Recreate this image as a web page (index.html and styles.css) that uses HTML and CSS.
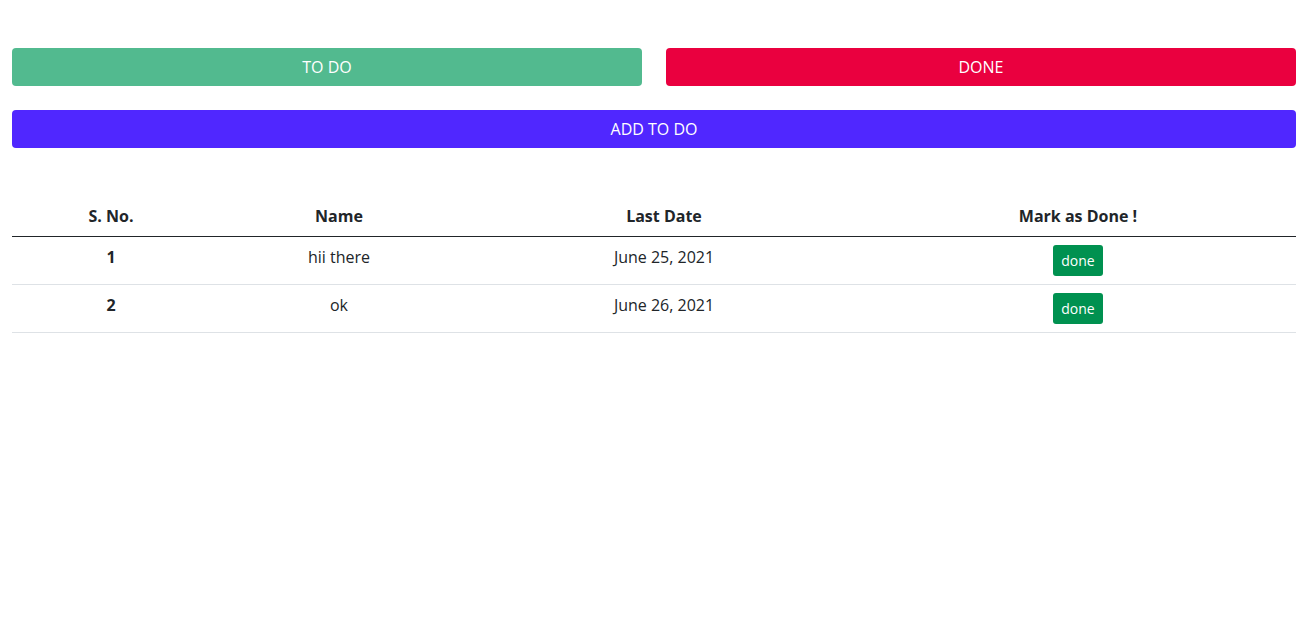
FILE: index.html
```html
<!DOCTYPE html>
<html lang="en">
<head>
<meta charset="utf-8">
<title>To Do</title>
<link rel="stylesheet" href="styles.css">
</head>
<body>
<div class="page">
  <div class="row-two">
    <button class="btn btn-todo">TO DO</button>
    <button class="btn btn-done">DONE</button>
  </div>
  <button class="btn btn-add">ADD TO DO</button>
  <table class="tasks">
    <thead>
      <tr>
        <th class="c1">S. No.</th>
        <th class="c2">Name</th>
        <th class="c3">Last Date</th>
        <th class="c4">Mark as Done !</th>
      </tr>
    </thead>
    <tbody>
      <tr>
        <th>1</th>
        <td>hii there</td>
        <td>June 25, 2021</td>
        <td><button class="btn-sm">done</button></td>
      </tr>
      <tr>
        <th>2</th>
        <td>ok</td>
        <td>June 26, 2021</td>
        <td><button class="btn-sm">done</button></td>
      </tr>
    </tbody>
  </table>
</div>
</body>
</html>
```

FILE: styles.css
```css
* { box-sizing: border-box; }
body {
  margin: 0;
  font-family: "Open Sans", "Noto Sans", sans-serif;
  font-size: 16px;
  line-height: 1.5;
  color: #212529;
  background: #fff;
}
.page {
  padding: 48px 12px 0;
}
.row-two {
  display: flex;
  gap: 24px;
}
.btn {
  display: block;
  border: 0;
  border-radius: 4px;
  height: 38px;
  font-family: inherit;
  font-size: 16px;
  color: #fff;
  text-align: center;
  padding: 0;
  width: 100%;
}
.row-two .btn { flex: 1; }
.btn-todo { background: #52ba8f; }
.btn-done { background: #ea003f; }
.btn-add { background: #5027ff; margin-top: 24px; }
.tasks {
  width: 100%;
  margin-top: 48px;
  border-collapse: collapse;
  text-align: center;
}
.tasks th, .tasks td {
  padding: 8px;
  vertical-align: top;
  border-bottom: 1px solid #dee2e6;
}
.tasks thead th {
  border-bottom: 1px solid #212529;
  vertical-align: bottom;
}
.tasks th { font-weight: 700; }
.c1 { width: 198px; }
.c2 { width: 258px; }
.c3 { width: 392px; }
.c4 { width: 436px; }
.btn-sm {
  display: inline-block;
  border: 0;
  border-radius: 3px;
  background: #009150;
  color: #fff;
  font-family: inherit;
  font-size: 14px;
  line-height: 21px;
  padding: 5px 8px;
  height: 31px;
  vertical-align: top;
}
```
